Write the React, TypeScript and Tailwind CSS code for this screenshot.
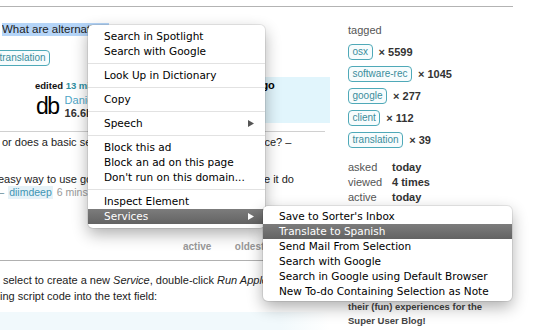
import clsx from "clsx";

type MenuEntry = { label: string; sub?: boolean; active?: boolean } | "sep";

const MAIN_MENU: MenuEntry[] = [
  { label: "Search in Spotlight" },
  { label: "Search with Google" },
  "sep",
  { label: "Look Up in Dictionary" },
  "sep",
  { label: "Copy" },
  "sep",
  { label: "Speech", sub: true },
  "sep",
  { label: "Block this ad" },
  { label: "Block an ad on this page" },
  { label: "Don't run on this domain..." },
  "sep",
  { label: "Inspect Element" },
  { label: "Services", sub: true, active: true },
];

const SERVICES: MenuEntry[] = [
  { label: "Save to Sorter's Inbox" },
  { label: "Translate to Spanish", active: true },
  { label: "Send Mail From Selection" },
  { label: "Search with Google" },
  { label: "Search in Google using Default Browser" },
  { label: "New To-do Containing Selection as Note" },
];

const TAGS = [
  { name: "osx", count: "5599" },
  { name: "software-rec", count: "1045" },
  { name: "google", count: "277" },
  { name: "client", count: "112" },
  { name: "translation", count: "39" },
];

function Tag({ name }: { name: string }) {
  return (
    <span className="inline-flex h-[16px] items-center rounded-[4px] border-[1.5px] border-[#4fa9b8] bg-[#f7fcfd] px-[3.5px] text-[10px] leading-none text-[#3a8d9c]">
      {name}
    </span>
  );
}

function Arrow() {
  return (
    <svg width="6" height="7" viewBox="0 0 6 7">
      <path d="M0 0L6 3.5L0 7Z" fill="currentColor" />
    </svg>
  );
}

function Menu({ items, className }: { items: MenuEntry[]; className: string }) {
  return (
    <div
      className={clsx(
        "absolute rounded-[5px] bg-white font-['DejaVu_Sans',sans-serif] text-[10.5px] text-black shadow-[0_6px_16px_rgba(0,0,0,0.32),0_0_0_1px_rgba(0,0,0,0.08)]",
        className
      )}
    >
      {items.map((item, i) =>
        item === "sep" ? (
          <div key={i} className="my-[4px] h-px bg-[#e2e2e2]" />
        ) : (
          <div
            key={i}
            className={clsx(
              "flex h-[15px] items-center justify-between whitespace-nowrap pl-[16px] pr-[11px]",
              item.active && "bg-[linear-gradient(#7c7c7c,#636363)] text-white"
            )}
          >
            <span>{item.label}</span>
            {item.sub && (
              <span className={item.active ? "text-white" : "text-[#555]"}>
                <Arrow />
              </span>
            )}
          </div>
        )
      )}
    </div>
  );
}

function Question() {
  return (
    <div className="w-[330px] shrink-0 overflow-hidden">
      <div className="mt-[16px] h-[13px] pl-[2px] text-[11.5px] leading-[13px]">
        <span className="inline-block w-[107px] overflow-hidden whitespace-nowrap bg-[#b5d5f8] align-top">
          What are alternatives to
        </span>
      </div>
      <div className="ml-[-5px] mt-[14px] flex">
        <Tag name="translation" />
      </div>

      <div className="mt-[11px] flex h-[46px]">
        <div className="ml-[35px] pt-[2px]">
          <div className="h-[13px] whitespace-nowrap text-[9.5px] font-bold leading-[13px] text-[#111]">
            edited <span className="text-[#2f8fa1]">13 mins ago</span>
          </div>
          <div className="mt-[2px] flex gap-[6px]">
            <span className="ml-px text-[23px] leading-[24px] tracking-[-1.5px] text-black">db</span>
            <div className="leading-[13px]">
              <div className="text-[#4ea5c6]">Daniel</div>
              <div className="font-bold text-[#333]">16.6k</div>
            </div>
          </div>
        </div>
        <div className="ml-auto w-[158px] whitespace-nowrap bg-[#e1f5fc] pl-[5px] pt-[2px] font-bold leading-[13px] text-black">
          asked 15 mins ago
        </div>
      </div>

      <div className="mt-[8px] w-[325px] border-t border-[#d0d0d0]" />
      <div className="mt-[4px] flex h-[13px] whitespace-nowrap leading-[13px] text-[#222]">
        <span className="w-[262px] shrink-0 overflow-hidden pl-[2px]">
          or does a basic search on google.com do the same as this serv
        </span>
        <span>ice? –</span>
      </div>
      <div className="mt-[23.5px] flex h-[13px] whitespace-nowrap leading-[13px] text-[#222]">
        <span className="w-[264px] shrink-0 overflow-hidden">
          <span className="ml-[-2px] inline-block">easy way to use google translate from a menu or would you us</span>
        </span>
        <span>e it do</span>
      </div>
      <div className="flex h-[13px] items-center whitespace-nowrap leading-[13px]">
        <span className="ml-[-2px] text-[#6a8d99]">–</span>
        <span className="ml-[4px] bg-[#e6f2f8] px-px text-[10.5px] text-[#3f95b4]">diimdeep</span>
        <span className="ml-[4px] text-[10.5px] text-[#999]">6 mins ago</span>
      </div>

      <div className="mt-[42.5px] flex h-[12px] pl-[183px] text-[10px] font-bold leading-[12px] text-[#999]">
        <span>active</span>
        <span className="ml-[23.5px]">oldest</span>
      </div>
      <div className="mt-[7px] border-t border-[#b0b0b0]" />

      <div className="mt-[11px] whitespace-nowrap pl-[3px] leading-[16px] text-[#222]">
        select to create a new <i>Service</i>, double-click <i>Run AppleScript</i> and paste the
      </div>
      <div className="whitespace-nowrap leading-[16px] text-[#222]">ing script code into the text field:</div>
      <div className="mt-[8px] h-[30px] bg-[linear-gradient(90deg,#f1f9fc_85%,#ffffff)]" />
    </div>
  );
}

function Sidebar() {
  return (
    <div className="ml-[18px] pt-[17px] text-[11px]">
      <div className="h-[13px] leading-[13px] text-[#555]">tagged</div>
      <div className="mt-[7px] flex flex-col gap-[6px]">
        {TAGS.map((t) => (
          <div key={t.name} className="flex h-[16px] items-center">
            <Tag name={t.name} />
            <span className="ml-[6px] font-bold text-[#333]">× {t.count}</span>
          </div>
        ))}
      </div>
      <div className="mt-[11.5px] grid grid-cols-[44px_auto] leading-[15px]">
        <span className="text-[#555]">asked</span>
        <span className="font-bold text-[#333]">today</span>
        <span className="text-[#555]">viewed</span>
        <span className="font-bold text-[#333]">4 times</span>
        <span className="text-[#555]">active</span>
        <span className="font-bold text-[#333]">today</span>
      </div>
      <div className="mt-[95.5px] text-[9.5px] font-bold leading-[14px] text-[#444]">
        <div>their (fun) experiences for the</div>
        <div>Super User Blog!</div>
      </div>
    </div>
  );
}

export default function App() {
  return (
    <div className="relative h-[330px] w-[540px] overflow-hidden bg-white font-['Liberation_Sans',Arial,sans-serif] text-[11px] text-[#222]">
      <div className="h-[7px] w-[513px] border-b border-[#b3b3b3]" />
      <div className="flex">
        <Question />
        <Sidebar />
      </div>
      <Menu items={MAIN_MENU} className="left-[88px] top-[25px] w-[177px] py-[4px]" />
      <Menu items={SERVICES} className="left-[263px] top-[206px] w-[249px] pb-[2px] pt-[3px]" />
    </div>
  );
}
